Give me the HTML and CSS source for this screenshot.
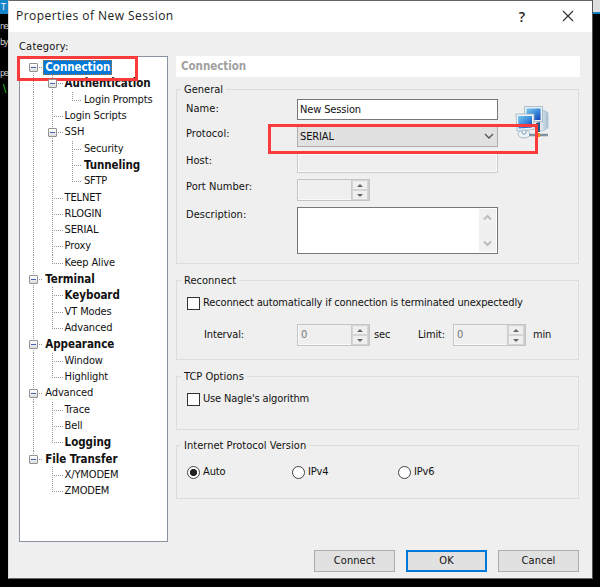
FILE: index.html
```html
<!DOCTYPE html>
<html lang="en">
<head>
<meta charset="utf-8">
<title>Properties of New Session</title>
<link rel="stylesheet" href="styles.css">
</head>
<body>
<div class="terminal" aria-hidden="true"><div class="tab">T</div><span>ne</span><span>by</span><span></span><span>pe</span><span class="green">\</span></div>
<main class="dialog">
  <header class="titlebar">
    <h1>Properties of New Session</h1>
    <span class="help">?</span>
    <svg class="close" width="12" height="12" viewBox="0 0 12 12"><path d="M1 1l10 10M11 1L1 11" stroke="#333" stroke-width="1.2" fill="none"/></svg>
  </header>
  <div class="body">
    <section class="category">
      <div class="cat-label">Category:</div>
      <div class="tree" id="tree"></div>
    </section>
    <section class="page">
      <h2>Connection</h2>
      <div class="group general">
        <div class="legend">General</div>
        <div class="row r-name"><label>Name:</label><div class="input name"><span>New Session</span></div>
          <svg class="neticon" width="34" height="36" viewBox="0 0 34 36">
            <defs>
              <linearGradient id="scr" x1="0" y1="0" x2="1" y2="1"><stop offset="0" stop-color="#7cc8ee"/><stop offset=".5" stop-color="#3d8ddd"/><stop offset="1" stop-color="#153fb4"/></linearGradient>
              <linearGradient id="tow" x1="0" y1="0" x2="1" y2="0"><stop offset="0" stop-color="#f4f8fb"/><stop offset="1" stop-color="#a9bfd0"/></linearGradient>
            </defs>
            <path d="M25 5l6 1 2 2v15l-5 3h-5z" fill="url(#tow)" stroke="#a7bccb" stroke-width=".7"/>
            <path d="M9.500 1.500h18v15h-18z" fill="#e7eff5" stroke="#9bb2c3" stroke-width=".8"/>
            <path d="M11.500 3.500h14v11.500h-14z" fill="url(#scr)"/>
            <path d="M21 18l4-1v10h-4z" fill="#285c86"/>
            <path d="M1 9h18v15.500l-17 1.500z" fill="#edf4f8" stroke="#9bb2c3" stroke-width=".8"/>
            <path d="M3 11h14v11.500l-13.500 1z" fill="url(#scr)"/>
            <ellipse cx="9" cy="29" rx="6" ry="4" fill="#edf4f8" stroke="#a2b6c5"/>
            <path d="M7 26v2q2 3 4 0v-2" fill="none" stroke="#7b9dbb"/>
            <path d="M14 30h19" stroke="#7d919f" stroke-width="2.500"/>
            <path d="M21 28h4v4h-4z" fill="#f28a18"/>
          </svg>
        </div>
        <div class="row r-proto"><label>Protocol:</label><div class="input select"><span>SERIAL</span><svg width="10" height="7" viewBox="0 0 10 7"><path d="M1 1l4 4 4-4" fill="none" stroke="#555" stroke-width="1.3"/></svg></div></div>
        <div class="row r-host"><label>Host:</label><div class="input off"></div></div>
        <div class="row r-port"><label>Port Number:</label><div class="spin"><span></span><div class="arrows"><i class="up"></i><i class="dn"></i></div></div></div>
        <div class="row r-desc"><label>Description:</label><div class="input area"><div class="scroll"><svg width="9" height="7" viewBox="0 0 9 7"><path d="M1 5.500l3.500-3.500 3.500 3.500" fill="none" stroke="#bdbdbd" stroke-width="2"/></svg><svg width="9" height="7" viewBox="0 0 9 7"><path d="M1 1.500l3.500 3.500 3.500-3.500" fill="none" stroke="#bdbdbd" stroke-width="2"/></svg></div></div></div>
      </div>
      <div class="group reconnect">
        <div class="legend">Reconnect</div>
        <div class="check"><b></b><span class="long">Reconnect automatically if connection is terminated unexpectedly</span></div>
        <div class="timing"><label>Interval:</label><div class="spin"><span>0</span><div class="arrows"><i class="up"></i><i class="dn"></i></div></div><span class="sec">sec</span><span class="limit">Limit:</span><div class="spin"><span>0</span><div class="arrows"><i class="up"></i><i class="dn"></i></div></div><span class="min">min</span></div>
      </div>
      <div class="group tcp">
        <div class="legend">TCP Options</div>
        <div class="check"><b></b><span>Use Nagle's algorithm</span></div>
      </div>
      <div class="group ip">
        <div class="legend">Internet Protocol Version</div>
        <div class="radios"><div class="check radio on"><b></b><span>Auto</span></div><div class="check radio"><b></b><span>IPv4</span></div><div class="check radio"><b></b><span>IPv6</span></div></div>
      </div>
      <footer><button>Connect</button><button class="default">OK</button><button>Cancel</button></footer>
    </section>
  </div>
</main>
<div class="mark mark-tree"></div>
<div class="mark mark-protocol"></div>
<script src="tree.js"></script>
</body>
</html>
```
FILE: tree.js
```js
// Each entry: guide cells, label, style.
// v = vertical line, t = tee, l = corner, x = blank,
// f/m/e = expander at the first, a middle or the last sibling.
const rows = [
  ["f", "Connection", "bold selected"],
  ["vm", "Authentication", "bold"],
  ["vvl", "Login Prompts"],
  ["vt", "Login Scripts"],
  ["vm", "SSH"],
  ["vvt", "Security"],
  ["vvt", "Tunneling", "bold"],
  ["vvl", "SFTP"],
  ["vt", "TELNET"],
  ["vt", "RLOGIN"],
  ["vt", "SERIAL"],
  ["vt", "Proxy"],
  ["vl", "Keep Alive"],
  ["m", "Terminal", "bold"],
  ["vt", "Keyboard", "bold"],
  ["vt", "VT Modes"],
  ["vl", "Advanced"],
  ["m", "Appearance", "bold"],
  ["vt", "Window"],
  ["vl", "Highlight"],
  ["m", "Advanced"],
  ["vt", "Trace"],
  ["vt", "Bell"],
  ["vl", "Logging", "bold"],
  ["e", "File Transfer", "bold"],
  ["xt", "X/YMODEM"],
  ["xl", "ZMODEM"]
];
document.getElementById("tree").innerHTML = rows.map(([cells, label, style = ""]) =>
  `<div class="node ${style}">${[...cells].map(c => `<i class="g ${c}">${"fme".includes(c) ? "<b></b>" : ""}</i>`).join("")}<span>${label}</span></div>`
).join("");
```
FILE: styles.css
```css
* { box-sizing: border-box; }
body { margin: 0; width: 600px; height: 587px; overflow: hidden; background: linear-gradient(#dedede 0 12px, #1682c8 12px 14px, #000 14px); font: 11px/16px "DejaVu Sans Condensed", "DejaVu Sans", sans-serif; font-stretch: condensed; letter-spacing: -.14px; color: #111; }
.terminal { position: absolute; left: 0; top: 0; width: 8px; height: 587px; background: #000; color: #ccc; display: flex; flex-direction: column; line-height: 15.5px; font-size: 9px; letter-spacing: -1.5px; }
.terminal span { height: 15.5px; }
.terminal .green { color: #20d020; margin-left: 3px; font-size: 11px; }
.tab { height: 14px; margin-bottom: 5px; padding-left: 1px; background: #1785cc; color: #fff; line-height: 14px; }
.dialog { position: relative; margin: 0 0 0 8px; width: 585px; height: 579px; background: #efefef; border: 1px solid #666; border-left-color: #ddd; border-right-color: #555; overflow: hidden; }
.titlebar { height: 31px; background: #fff; display: flex; align-items: center; padding: 0 18px 1px 7px; }
h1 { margin: 0; font: 12px/18px "Open Sans", "Noto Sans", sans-serif; letter-spacing: .46px; flex: 1; color: #222; }
.help { font: 600 14px "Open Sans", sans-serif; margin-right: 37px; color: #222; }
.body { display: flex; height: 546px; padding: 6px 12px 0 10px; }
.category { width: 149px; margin-right: 8px; }
.cat-label { height: 18px; line-height: 17px; letter-spacing: .2px; }
.tree { height: 486px; border: 1px solid #8a919f; background: #fff; padding: 2px 0 0 4px; }
.node { display: flex; height: 16.32px; line-height: 16.32px; white-space: nowrap; }
.node span { padding: 0 2px; }
.bold { font-weight: bold; font-size: 11.5px; letter-spacing: -.05px; }
.selected span { background: #0078d7; color: #fff; outline: 1px dotted #b8722e; outline-offset: -1px; height: 15px; line-height: 15px; margin-top: 1px; }
.g { width: 19.3px; flex: none; position: relative; }
.g::before { content: ""; position: absolute; left: 9px; top: 0; bottom: 0; width: 1px; background: repeating-linear-gradient(#999 0 1px, transparent 1px 2px); }
.g::after { content: ""; position: absolute; left: 9px; right: 0; top: 8px; height: 1px; background: repeating-linear-gradient(90deg, #999 0 1px, transparent 1px 2px); }
.v::after, .x::after, .x::before { display: none; }
.l::before, .e::before { bottom: 8px; }
.f::before { top: 8px; }
.g b { position: absolute; z-index: 1; left: 5px; top: 4px; width: 9px; height: 9px; border: 1px solid #929292; border-radius: 1px; background: linear-gradient(#4864b4, #4864b4) center / 5px 1px no-repeat, linear-gradient(#fff, #ddd); }
.page { width: 404px; padding-top: 18px; }
h2 { margin: 0 0 12px; height: 21px; line-height: 21px; padding-left: 5px; background: #fff; color: #a0a0a0; font-size: 11.5px; letter-spacing: -.05px; }
.group { width: 403px; border: 1px solid #dcdcdc; }
.legend { width: max-content; height: 16px; margin: -8px 0 0 4px; padding: 0 3px; background: #efefef; letter-spacing: .02px; }
.general { height: 175px; margin-bottom: 16px; }
.row { display: flex; align-items: flex-start; padding-left: 9px; }
.row label { width: 111px; letter-spacing: .05px; }
.input { width: 201px; height: 21px; border: 1px solid #777; background: #fff; padding: 0 3px 0 2px; line-height: 20px; }
.row label { line-height: 16px; }
.r-name { height: 27px; margin-top: 1px; }
.r-name label { margin-top: 2px; }
.neticon { margin: 6px 0 -20px 17px; }
.r-proto { height: 27px; }
.select { background: #e1e1e1; border-color: #adadad; display: flex; justify-content: space-between; align-items: center; }
.r-host { height: 26px; }
.off { background: #efefef; border-color: #ccc; height: 20px; box-shadow: inset 0 0 0 1px #fafafa; }
.r-port { height: 28px; }
.spin { width: 73px; height: 22px; border: 1px solid #c4c4c4; display: flex; justify-content: space-between; padding-left: 3px; color: #777; line-height: 20px; box-shadow: inset 1px -1px #fafafa; }
.arrows { width: 18px; display: grid; grid-template-rows: 1fr 1fr; border: 1px solid #ccc; border-width: 0 1px 0 1px; }
.arrows i { border: 1px solid #d5d5d5; display: grid; place-items: center; }
.arrows i::before { content: ""; border: 3px solid transparent; }
.up::before { border-top: 0 !important; border-bottom-color: #666 !important; }
.dn::before { border-bottom: 0 !important; border-top-color: #666 !important; }
.area { height: 47px; padding: 1px; display: flex; justify-content: flex-end; }
.scroll { width: 17px; background: #f0f0f0; display: flex; flex-direction: column; align-items: center; justify-content: space-between; padding: 5px 0; }
.reconnect { height: 80px; margin-bottom: 16px; }
.check { display: flex; align-items: center; gap: 2px; height: 16px; padding-left: 10px; margin-top: 6px; white-space: nowrap; }
.check b { width: 13px; height: 13px; border: 1px solid #333; background: #fff; }
.check span { padding-left: 1px; }
.timing { display: flex; align-items: center; height: 22px; margin-top: 13px; padding-left: 27px; }
.timing label { width: 93px; }
.sec { width: 48px; padding-left: 4px; }
.limit { width: 35px; }
.min { padding-left: 7px; }
.tcp { height: 54px; margin-bottom: 15px; }
.ip { height: 54px; }
.radios { display: flex; margin-top: 10px; }
.radio { width: 106px; margin: 0; }
.radio:first-child { width: 105px; }
.radio b { border-radius: 50%; border-color: #444; }
.on b { background: radial-gradient(circle, #222 0 3.2px, #fff 4px); }
footer { display: flex; gap: 11px; margin: 51px 0 0 138px; }
button { width: 81px; height: 22px; padding: 0; border: 1px solid #adadad; background: #e1e1e1; font: inherit; letter-spacing: .05px; color: #111; }
.default { border: 2px solid #0078d7; }
.mark { position: absolute; border: 3px solid #fb3b3b; }
.mark-tree { left: 17px; top: 56px; width: 121px; height: 25px; }
.mark-protocol { left: 268px; top: 124px; width: 270px; height: 30px; }
```
